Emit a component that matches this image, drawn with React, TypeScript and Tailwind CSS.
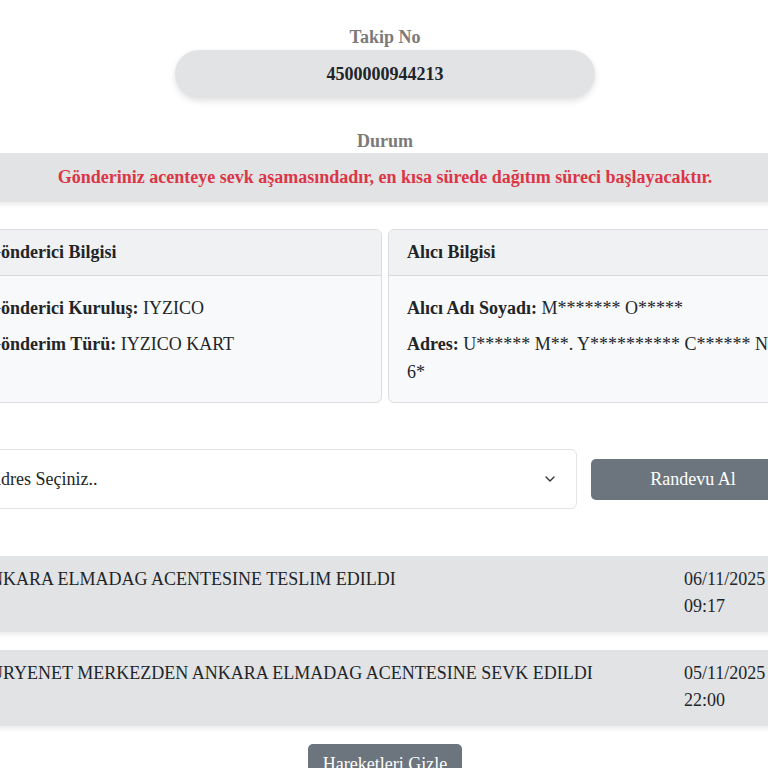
import { ChevronDown } from "lucide-react";

const movements = [
  { text: "ANKARA ELMADAG ACENTESINE TESLIM EDILDI", date: "06/11/2025", time: "09:17" },
  { text: "KURYENET MERKEZDEN ANKARA ELMADAG ACENTESINE SEVK EDILDI", date: "05/11/2025", time: "22:00" },
];

export default function App() {
  return (
    <div className="min-h-screen w-full overflow-hidden bg-white font-['Liberation_Serif'] text-[18px] text-[#212529]">
      <div className="ml-[-34px] w-[838px] pt-[26px]">
        <div className="flex flex-col items-center">
          <div className="font-bold leading-[22px] text-[#7a7a7a]">Takip No</div>
          <div className="mt-[2px] flex h-[48px] w-[420px] items-center justify-center rounded-full bg-[#e2e3e5] font-bold shadow-[0_3px_6px_rgba(0,0,0,0.12)]">
            4500000944213
          </div>
          <div className="mt-[32px] font-bold leading-[22px] text-[#7a7a7a]">Durum</div>
        </div>
        <div className="mt-[1px] flex h-[49px] items-center justify-center bg-[#e2e3e5] font-bold text-[#dc3545] shadow-[0_3px_5px_rgba(0,0,0,0.08)]">
          Gönderiniz acenteye sevk aşamasındadır, en kısa sürede dağıtım süreci başlayacaktır.
        </div>

        <div className="mt-[27px] grid grid-cols-2 gap-[6px]">
          <div className="overflow-hidden rounded-[6px] border border-[#dcdde0] bg-[#f8f9fa]">
            <div className="flex h-[46px] items-center border-b border-[#d6d8db] bg-[#f0f1f2] px-[20px] font-bold">
              Gönderici Bilgisi
            </div>
            <div className="flex flex-col gap-[8px] px-[20px] pt-[18px] pb-[16px] leading-[28px]">
              <p><b>Gönderici Kuruluş:</b> IYZICO</p>
              <p><b>Gönderim Türü:</b> IYZICO KART</p>
            </div>
          </div>
          <div className="overflow-hidden rounded-[6px] border border-[#dcdde0] bg-[#f8f9fa]">
            <div className="flex h-[46px] items-center border-b border-[#d6d8db] bg-[#f0f1f2] px-[18px] font-bold">
              Alıcı Bilgisi
            </div>
            <div className="flex flex-col gap-[8px] pl-[18px] pr-[8px] pt-[18px] pb-[16px] leading-[28px]">
              <p><b>Alıcı Adı Soyadı:</b> M******* O*****</p>
              <p><b>Adres:</b> U****** M**. Y********** C****** N** 6*</p>
            </div>
          </div>
        </div>

        <div className="mt-[46px] flex items-center gap-[14px] pl-[5px] pr-[9px]">
          <div className="flex h-[60px] flex-1 items-center justify-between rounded-[6px] border border-[#e3e4e6] bg-white px-[16px]">
            <span>Adres Seçiniz..</span>
            <ChevronDown size={16} strokeWidth={2} className="mr-[2px] text-[#333]" />
          </div>
          <button className="h-[41px] w-[204px] rounded-[5px] bg-[#6c757d] text-white">Randevu Al</button>
        </div>

        <div className="mt-[47px] flex flex-col gap-[18px]">
          {movements.map((m) => (
            <div key={m.date} className="flex h-[76px] justify-between bg-[#e2e3e5] pl-[11px] pt-[10px] leading-[27px] shadow-[0_3px_5px_rgba(0,0,0,0.08)]">
              <div>{m.text}</div>
              <div className="w-[120px]">
                <div>{m.date}</div>
                <div>{m.time}</div>
              </div>
            </div>
          ))}
        </div>

        <div className="mt-[18px] flex justify-center">
          <button className="h-[40px] w-[154px] rounded-[5px] bg-[#6c757d] text-white">Hareketleri Gizle</button>
        </div>
      </div>
    </div>
  );
}
